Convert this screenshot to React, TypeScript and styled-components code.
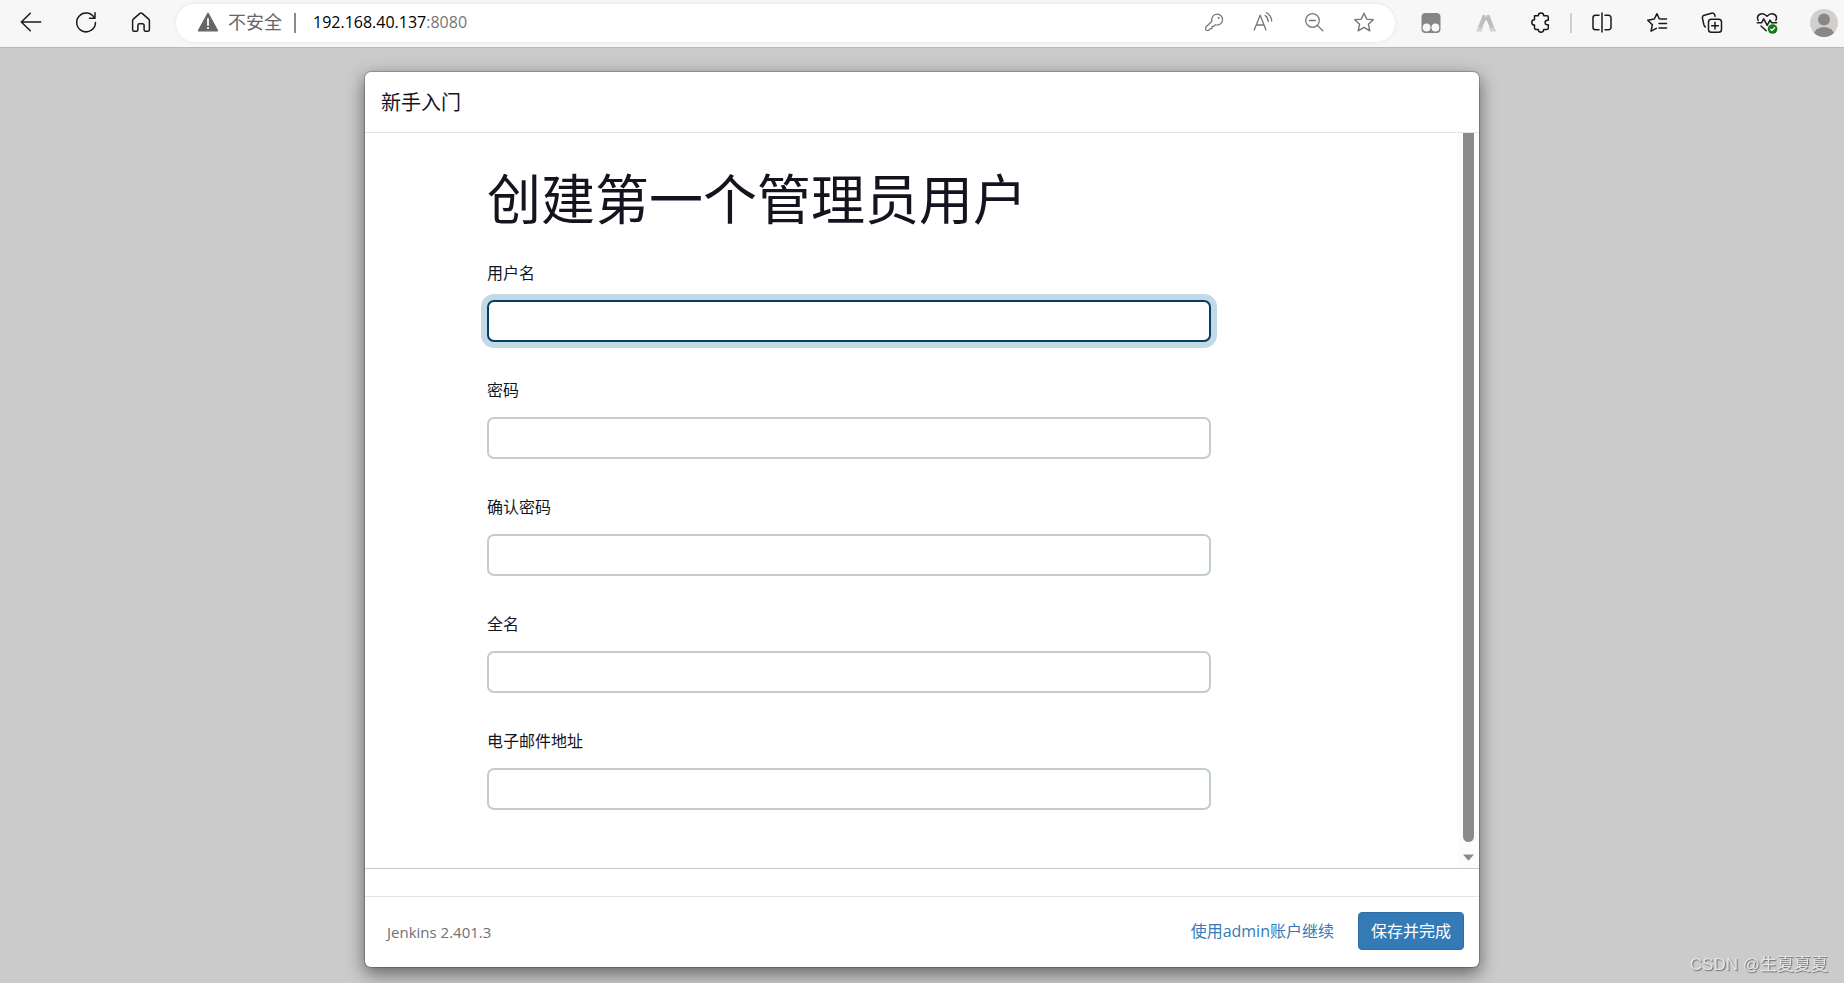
import React from "react";
import styled, { createGlobalStyle, css } from "styled-components";

const GlobalStyle = createGlobalStyle`
  *, *::before, *::after { box-sizing: border-box; }
  html, body { margin: 0; }
  body {
    background: #cbcbcb;
    color: #14141f;
    font-family: "Open Sans", "Noto Sans", "Noto Sans CJK SC", sans-serif;
    font-size: 16px;
    line-height: 24px;
  }
  button, input { font: inherit; }
`;

const Page = styled.div`
  display: flex;
  flex-direction: column;
  height: 100vh;
  min-height: 640px;
`;

/* Browser toolbar */

const Toolbar = styled.header`
  display: flex;
  align-items: center;
  flex: none;
  height: 48px;
  padding: 0 0 1px 3px;
  background: #f7f7f7;
  border-bottom: 1px solid #b9b9b9;
`;

const ToolButton = styled.button<{ $width?: number; $color?: string }>`
  display: flex;
  align-items: center;
  justify-content: center;
  flex: none;
  width: ${(p) => p.$width ?? 55}px;
  height: 38px;
  padding: 0 0 2px;
  border: 0;
  background: none;
  color: ${(p) => p.$color ?? "#1b1b1b"};
`;

const ProfileButton = styled(ToolButton)`
  margin-left: 10px;
  padding: 0;
`;

const AddressBar = styled.div`
  display: flex;
  align-items: center;
  flex: 1;
  min-width: 0;
  height: 38px;
  margin-left: 8px;
  padding: 0 6px 0 20px;
  border-radius: 19px;
  background: #fff;
  box-shadow: 0 0 4px rgba(0, 0, 0, 0.08);
`;

const Security = styled.span`
  display: flex;
  align-items: center;
  gap: 8px;
  padding-bottom: 2px;
  color: #666;
  font-size: 18px;
  white-space: nowrap;
`;

const Divider = styled.span<{ $color: string }>`
  flex: none;
  width: 2px;
  height: 20px;
  margin: 0 2px;
  background: ${(p) => p.$color};
`;

const AddressDivider = styled(Divider)`
  margin: 0 17px 0 12px;
`;

const Url = styled.span`
  flex: 1;
  min-width: 0;
  overflow: hidden;
  padding-bottom: 2px;
  color: #000;
  white-space: nowrap;
`;

const Port = styled.span`
  color: #767676;
`;

const Extensions = styled.div`
  display: flex;
  align-items: center;
  flex: none;
  margin-left: 8px;
`;

/* Setup dialog */

const Backdrop = styled.main`
  display: flex;
  justify-content: center;
  flex: 1;
  min-height: 0;
  padding: 23px 24px 15px;
`;

const Dialog = styled.section`
  display: flex;
  flex-direction: column;
  width: 100%;
  max-width: 1116px;
  border: 1px solid rgba(0, 0, 0, 0.2);
  border-radius: 7px;
  background: #fff;
  background-clip: padding-box;
  box-shadow: 0 6px 17px rgba(0, 0, 0, 0.5);
`;

const DialogHeader = styled.div`
  flex: none;
  padding: 18px 16px 16px;
  border-bottom: 1px solid #e5e5e5;
`;

const DialogTitle = styled.h4`
  margin: 0;
  font-size: 20px;
  font-weight: 400;
  line-height: 26px;
`;

const DialogBody = styled.div`
  display: flex;
  flex: 1;
  min-height: 0;
  margin-bottom: 27px;
  border-bottom: 1px solid #c6c6c6;
`;

const ScrollArea = styled.div`
  flex: 1;
  min-width: 0;
  overflow: hidden;
  padding: 36px 24px 36px 122px;
`;

const ScrollTrack = styled.div`
  display: flex;
  flex-direction: column;
  align-items: center;
  flex: none;
  width: 21px;
  background: #fcfcfc;
`;

const ScrollThumb = styled.div`
  flex: 1;
  width: 11px;
  border-radius: 0 0 6px 6px;
  background: #8b8b8b;
`;

const ScrollArrow = styled.svg`
  flex: none;
  margin: 12px 0 7px;
`;

const Form = styled.form`
  max-width: 724px;
`;

const Heading = styled.h1`
  margin: 0 0 32px;
  font-size: 54px;
  font-weight: 400;
  line-height: 60px;
`;

const Fields = styled.div`
  display: grid;
  gap: 36px;
`;

const Field = styled.div`
  display: grid;
  gap: 15px;
`;

const Label = styled.label`
  line-height: 24px;
`;

const TextInput = styled.input<{ $active?: boolean }>`
  width: 100%;
  height: 42px;
  padding: 0 12px;
  border: 2px solid #c3ccd1;
  border-radius: 7px;
  outline: 0;
  background: #fff;
  ${(p) =>
    p.$active &&
    css`
      border-color: #053f63;
      box-shadow: 0 0 0 6px #c2dae8;
    `}
`;

const DialogFooter = styled.footer`
  display: flex;
  align-items: center;
  flex: none;
  height: 71px;
  padding: 0 15px 2px 22px;
  border-top: 1px solid #e5e5e5;
`;

const Version = styled.span`
  flex: 1;
  padding-top: 2px;
  color: #6f6f76;
  font-size: 15px;
`;

const SkipLink = styled.a`
  margin-right: 24px;
  color: #337ab7;
  text-decoration: none;
`;

const SubmitButton = styled.button`
  height: 38px;
  padding: 0 12px;
  border: 1px solid #2e6da4;
  border-radius: 4px;
  background: #337ab7;
  color: #fff;
  line-height: 24px;
`;

const Watermark = styled.span`
  position: fixed;
  right: 16px;
  bottom: 6px;
  color: #e4e4e4;
  font-family: "Liberation Sans", "Noto Sans CJK SC", sans-serif;
  font-size: 17px;
  text-shadow: 1px 1px 1px #6e6e6e;
`;

/* Icons */

type IconProps = { children: React.ReactNode; size?: number; stroke?: number };

const Icon = ({ children, size = 24, stroke = 1.5 }: IconProps) => (
  <svg
    width={size}
    height={size}
    viewBox={`0 0 ${size} ${size}`}
    fill="none"
    stroke="currentColor"
    strokeWidth={stroke}
    strokeLinecap="round"
    strokeLinejoin="round"
    aria-hidden="true"
  >
    {children}
  </svg>
);

const BackIcon = () => (
  <Icon>
    <path d="M2.3 12H21.7M11.3 3.2 2.3 12l9 8.8" />
  </Icon>
);

const ReloadIcon = () => (
  <Icon>
    <path d="M20.4 8A9.4 9.4 0 1 0 21.5 12.5" />
    <path d="M21 2.8V8.3H15.5" />
  </Icon>
);

const HomeIcon = () => (
  <Icon>
    <path d="M10.9 3.4a1.7 1.7 0 0 1 2.2 0l6.6 5.7c.5.4.7.9.7 1.5v9.1a1.5 1.5 0 0 1-1.5 1.5h-2.3a1.5 1.5 0 0 1-1.5-1.5v-4.4a1.5 1.5 0 0 0-1.5-1.5h-3.2a1.5 1.5 0 0 0-1.5 1.5v4.4a1.5 1.5 0 0 1-1.5 1.5H5.1a1.5 1.5 0 0 1-1.5-1.5v-9.1c0-.6.2-1.1.7-1.5z" />
  </Icon>
);

const WarningIcon = () => (
  <Icon>
    <path d="M12 3.3 21.4 20.700H2.600z" fill="currentColor" stroke="currentColor" />
    <path d="M12 9v6" stroke="#fff" strokeWidth="1.8" />
    <circle cx="12" cy="18" r="1.1" fill="#fff" stroke="none" />
  </Icon>
);

const KeyIcon = () => (
  <Icon stroke={1.2}>
    <path d="M15 4.200a5.400 5.400 0 1 1-1.600 10.500l-1.500 1.700h-1.900v2.200H8.200l-1.700 1.900H4.700a1 1 0 0 1-1-1v-2.200L9.900 11.200A5.500 5.500 0 0 1 15 4.200z" />
    <circle cx="16.700" cy="8" r="1" fill="currentColor" stroke="none" />
  </Icon>
);

const ReadAloudIcon = () => (
  <Icon stroke={1.3}>
    <path d="M2.200 20 8.200 5.200 14 20M4.300 15h7.700" />
    <path d="M13.200 5.500a7.500 7.500 0 0 1 3 6M14.500 2.700a10.500 10.500 0 0 1 5.200 8.300" />
  </Icon>
);

const ZoomOutIcon = () => (
  <Icon stroke={1.3}>
    <circle cx="10.500" cy="10.500" r="6.800" />
    <path d="M7.500 10.500h6M15.500 15.500l5.300 5.300" />
  </Icon>
);

const StarIcon = () => (
  <Icon stroke={1.4}>
    <path d="m12 3.200 2.700 5.900 6.600.7-4.900 4.400 1.400 6.600-5.800-3.400-5.800 3.400 1.400-6.600-4.900-4.400 6.600-.7z" />
  </Icon>
);

const MonkeyIcon = () => (
  <Icon>
    <rect x="2.500" y="3" width="19" height="20" rx="4" fill="#858585" stroke="none" />
    <circle cx="7.600" cy="17.500" r="3.900" fill="#f7f7f7" stroke="none" />
    <circle cx="16.400" cy="17.500" r="3.900" fill="#f7f7f7" stroke="none" />
  </Icon>
);

const PeaksIcon = () => (
  <Icon>
    <g stroke="none">
      <path d="M8.800 5h2.700L8 21.500H2z" fill="#d2d2d2" />
      <path d="M12.800 5h2.700L22 21.500h-6z" fill="#d2d2d2" />
      <path d="M8.800 5h2.200l1 2.500 1-2.500h2.200l4.300 12-3 1L12 9.500 7.500 18l-3-1z" fill="#bdbdbd" />
      <path d="M12 10.500 16 21.500H8z" fill="#f7f7f7" />
    </g>
  </Icon>
);

const PuzzleIcon = () => (
  <Icon>
    <path d="M5.500 5.700h3.800a2.700 2.700 0 0 1 5.400 0h3.300a1.300 1.300 0 0 1 1.300 1.300v3.200h-.9a2.300 2.300 0 0 0 0 4.600h.9V18a1.500 1.500 0 0 1-1.500 1.500h-3.100a2.700 2.700 0 0 1-5.400 0H7a1.500 1.500 0 0 1-1.500-1.500v-2.900a2.700 2.700 0 0 1 0-5.400z" />
  </Icon>
);

const SplitIcon = () => (
  <Icon>
    <path d="M12 3v19M9 5.200H5.500A2.500 2.500 0 0 0 3 7.700v9.600a2.500 2.500 0 0 0 2.500 2.500H9M15 5.200h3.500A2.500 2.500 0 0 1 21 7.700v9.600a2.500 2.500 0 0 1-2.500 2.500H15" />
  </Icon>
);

const FavoritesIcon = () => (
  <Icon>
    <path d="M14.300 8.900 12 3.700 9.300 9 2.700 10.200l4.700 4.500-1.400 6.500 5.300-2.900M15.500 9h6M14 13.500h7.500M14 18h7.500" />
  </Icon>
);

const CollectionsIcon = () => (
  <Icon>
    <rect x="8.500" y="9.200" width="13" height="13" rx="2.800" />
    <path d="M15 12.300v6.800M11.600 15.700h6.800M5.300 17c-.8-.5-1.200-1.400-1.500-2.500L2.500 8.500C2.100 7 2.800 5.600 4.300 5.200l7.200-2c1.500-.4 2.800.3 3.200 1.800l.4 1.400" />
  </Icon>
);

const HealthIcon = () => (
  <Icon>
    <path d="M3.200 10.500C2 8 2.700 5.600 4.500 4.500c2.200-1.400 5-.9 7.500 1.700 2.500-2.600 5.300-3.100 7.500-1.700 1.800 1.100 2.500 3.500 1.300 6" />
    <path d="M2.300 12.800h4.200l2.200-4 3.500 6.500 2.800-5.200 1.700 2.700h5M6 16l5.200 4.700" />
    <circle cx="17.600" cy="19" r="4.800" fill="#107c10" stroke="none" />
    <path d="m15.700 19.200 1.300 1.300 2.600-2.800" stroke="#fff" strokeWidth="1.300" />
  </Icon>
);

const ProfileIcon = () => (
  <Icon size={28}>
    <clipPath id="avatar">
      <circle cx="14" cy="14" r="14" />
    </clipPath>
    <g clipPath="url(#avatar)" stroke="none">
      <rect width="28" height="28" fill="#d2d0ce" />
      <circle cx="14" cy="10.500" r="6" fill="#8a8886" />
      <ellipse cx="14" cy="25.500" rx="10" ry="7.500" fill="#8a8886" />
    </g>
  </Icon>
);

const fields = [
  { id: "username", label: "用户名", type: "text", active: true },
  { id: "password1", label: "密码", type: "password" },
  { id: "password2", label: "确认密码", type: "password" },
  { id: "fullname", label: "全名", type: "text" },
  { id: "email", label: "电子邮件地址", type: "text" },
];

export default function App() {
  return (
    <Page>
      <GlobalStyle />
      <Toolbar>
        <ToolButton aria-label="返回"><BackIcon /></ToolButton>
        <ToolButton aria-label="刷新"><ReloadIcon /></ToolButton>
        <ToolButton aria-label="主页"><HomeIcon /></ToolButton>
        <AddressBar>
          <Security><WarningIcon />不安全</Security>
          <AddressDivider $color="#8a8a8a" />
          <Url>192.168.40.137<Port>:8080</Port></Url>
          <ToolButton $width={50} $color="#767676" aria-label="密码"><KeyIcon /></ToolButton>
          <ToolButton $width={50} $color="#767676" aria-label="大声朗读"><ReadAloudIcon /></ToolButton>
          <ToolButton $width={50} $color="#767676" aria-label="缩小"><ZoomOutIcon /></ToolButton>
          <ToolButton $width={50} $color="#767676" aria-label="收藏"><StarIcon /></ToolButton>
        </AddressBar>
        <Extensions>
          <ToolButton aria-label="脚本扩展"><MonkeyIcon /></ToolButton>
          <ToolButton aria-label="扩展"><PeaksIcon /></ToolButton>
          <ToolButton aria-label="扩展管理"><PuzzleIcon /></ToolButton>
          <Divider $color="#d0d0d0" />
          <ToolButton aria-label="分屏"><SplitIcon /></ToolButton>
          <ToolButton aria-label="收藏夹"><FavoritesIcon /></ToolButton>
          <ToolButton aria-label="集锦"><CollectionsIcon /></ToolButton>
          <ToolButton aria-label="浏览器概要"><HealthIcon /></ToolButton>
          <ProfileButton $width={40} aria-label="个人资料"><ProfileIcon /></ProfileButton>
        </Extensions>
      </Toolbar>

      <Backdrop>
        <Dialog>
          <DialogHeader>
            <DialogTitle>新手入门</DialogTitle>
          </DialogHeader>
          <DialogBody>
            <ScrollArea>
              <Form id="create-admin">
                <Heading>创建第一个管理员用户</Heading>
                <Fields>
                  {fields.map((f) => (
                    <Field key={f.id}>
                      <Label htmlFor={f.id}>{f.label}</Label>
                      <TextInput id={f.id} name={f.id} type={f.type} $active={f.active} />
                    </Field>
                  ))}
                </Fields>
              </Form>
            </ScrollArea>
            <ScrollTrack>
              <ScrollThumb />
              <ScrollArrow width="11" height="7" viewBox="0 0 11 7" aria-hidden="true">
                <path d="M0 0.500h11L5.500 6.800z" fill="#8b8b8b" />
              </ScrollArrow>
            </ScrollTrack>
          </DialogBody>
          <DialogFooter>
            <Version>Jenkins 2.401.3</Version>
            <SkipLink href="#skip">使用admin账户继续</SkipLink>
            <SubmitButton type="submit" form="create-admin">保存并完成</SubmitButton>
          </DialogFooter>
        </Dialog>
      </Backdrop>
      <Watermark>CSDN @生夏夏夏</Watermark>
    </Page>
  );
}
